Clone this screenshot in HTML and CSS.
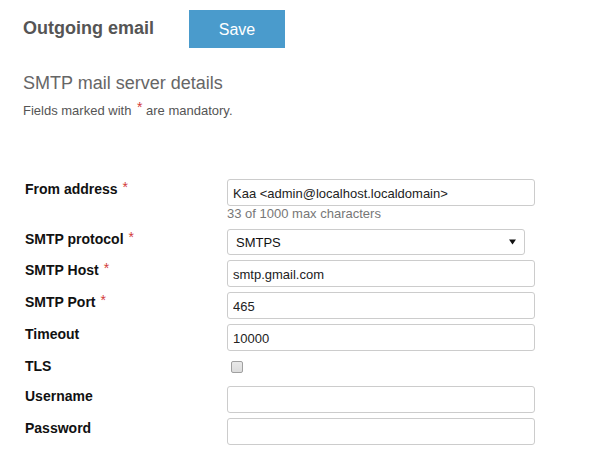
FILE: index.html
```html
<!DOCTYPE html>
<html lang="en">
<head>
<meta charset="utf-8">
<title>Outgoing email</title>
<link rel="stylesheet" href="styles.css">
</head>
<body>
<header class="top">
  <h1 class="title">Outgoing email</h1>
  <button class="save" type="button">Save</button>
</header>
<section class="intro">
  <h2 class="subtitle">SMTP mail server details</h2>
  <p class="note">Fields marked with <span class="req req-note">*</span> are mandatory.</p>
</section>
<form class="form">
  <div class="row">
    <label class="label">From address<span class="req">*</span></label>
    <div class="field">
      <input class="input" type="text" value="Kaa &lt;admin@localhost.localdomain&gt;">
      <div class="help">33 of 1000 max characters</div>
    </div>
  </div>
  <div class="row">
    <label class="label">SMTP protocol<span class="req">*</span></label>
    <div class="field">
      <div class="select-wrap">
        <select class="select"><option>SMTPS</option></select>
        <svg class="arrow" width="7" height="6" viewBox="0 0 7 6"><path d="M0 0.5H7L3.5 5.5Z" fill="#111"/></svg>
      </div>
    </div>
  </div>
  <div class="row">
    <label class="label">SMTP Host<span class="req">*</span></label>
    <div class="field"><input class="input" type="text" value="smtp.gmail.com"></div>
  </div>
  <div class="row">
    <label class="label">SMTP Port<span class="req">*</span></label>
    <div class="field"><input class="input" type="text" value="465"></div>
  </div>
  <div class="row">
    <label class="label">Timeout</label>
    <div class="field"><input class="input" type="text" value="10000"></div>
  </div>
  <div class="row row-check">
    <label class="label">TLS</label>
    <div class="field"><input class="check" type="checkbox"></div>
  </div>
  <div class="row">
    <label class="label">Username</label>
    <div class="field"><input class="input" type="text" value=""></div>
  </div>
  <div class="row">
    <label class="label">Password</label>
    <div class="field"><input class="input" type="password" value=""></div>
  </div>
</form>
</body>
</html>
```
FILE: styles.css
```css
* { box-sizing: border-box; }
html, body {
  margin: 0;
  padding: 0;
  background: #fff;
}
body {
  font-family: "Liberation Sans", Arial, sans-serif;
  color: #222;
  width: 596px;
  height: 471px;
  overflow: hidden;
}
.top {
  display: flex;
  align-items: flex-start;
  padding: 10px 0 0 23px;
}
.title {
  margin: 8px 0 0 0;
  width: 166px;
  font-size: 18px;
  line-height: 20px;
  font-weight: bold;
  color: #555;
}
.save {
  width: 96px;
  height: 38px;
  border: none;
  border-radius: 0;
  background: #4a9bcc;
  color: #fff;
  font-family: "Liberation Sans", Arial, sans-serif;
  font-size: 16px;
  padding: 0;
  padding-top: 1px;
}
.intro {
  padding-left: 23px;
}
.subtitle {
  margin: 25px 0 0 0;
  font-size: 18px;
  line-height: 20px;
  font-weight: normal;
  color: #666;
}
.note {
  margin: 9px 0 0 0;
  font-size: 13px;
  line-height: 16px;
  color: #555;
}
.req {
  color: #d23a3a;
  font-weight: normal;
  font-size: 14px;
  margin-left: 5px;
  position: relative;
  top: -2px;
}
.req.req-note {
  margin-left: 2px;
  top: -3px;
}
.form {
  margin-top: 60px;
  padding-left: 25px;
  display: flex;
  flex-direction: column;
  gap: 5px;
}
.row {
  display: grid;
  grid-template-columns: 202px 308px;
  align-items: start;
}
.label {
  font-size: 14px;
  line-height: 17px;
  font-weight: bold;
  color: #111;
  padding-top: 2px;
}
.field {
  display: flex;
  flex-direction: column;
}
.input {
  width: 308px;
  height: 27px;
  border: 1px solid #ccc;
  border-radius: 3px;
  padding: 1px 5px 0 5px;
  font-family: "Liberation Sans", Arial, sans-serif;
  font-size: 13px;
  color: #222;
  background: #fff;
  outline: none;
}
.help {
  font-size: 13px;
  line-height: 16px;
  color: #777;
  margin-bottom: 2px;
}
.select-wrap {
  position: relative;
  width: 298px;
}
.select {
  -webkit-appearance: none;
  appearance: none;
  width: 298px;
  height: 26px;
  border: 1px solid #ccc;
  border-radius: 3px;
  padding: 0 0 0 8px;
  font-family: "Liberation Sans", Arial, sans-serif;
  font-size: 13px;
  color: #111;
  background: #fff;
  outline: none;
}
.arrow {
  position: absolute;
  right: 9px;
  top: 10px;
}
.row-check {
  height: 25px;
}
.check {
  -webkit-appearance: none;
  appearance: none;
  width: 12px;
  height: 12px;
  margin: 5px 0 0 4px;
  border: 1px solid #a0a0a0;
  border-radius: 2px;
  background: linear-gradient(#e9e9e9, #dcdcdc);
}
```
